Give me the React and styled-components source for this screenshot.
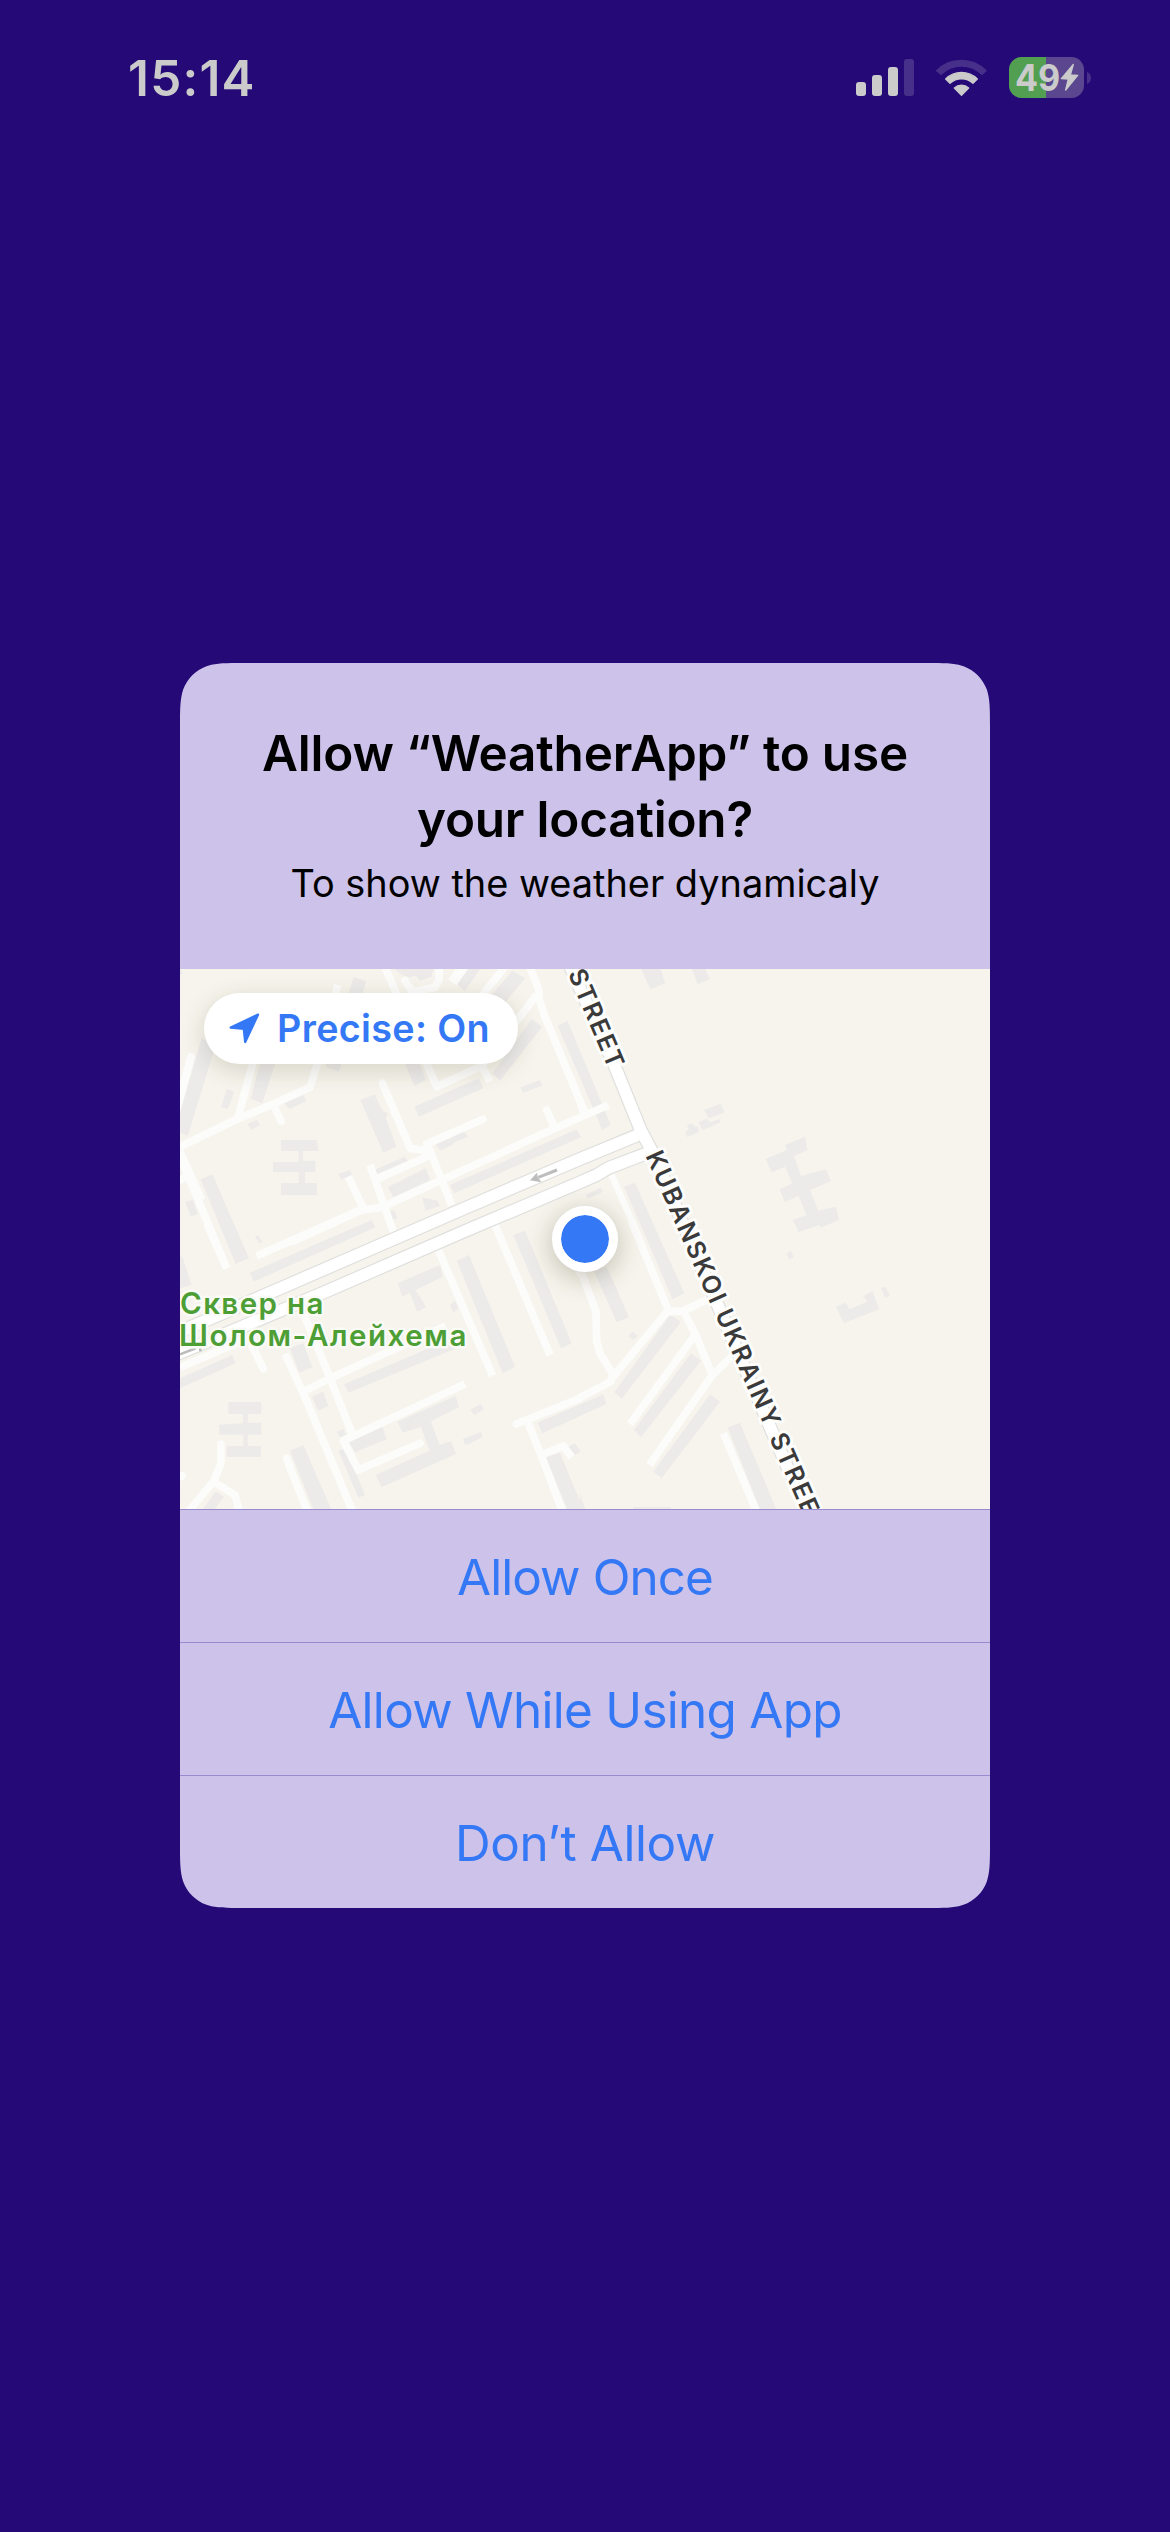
import React from "react";
import styled, { createGlobalStyle } from "styled-components";

const GlobalStyle = createGlobalStyle`
  *, *::before, *::after { box-sizing: border-box; }
  html, body { margin: 0; padding: 0; background: #250977; }
  body { font-family: Inter, "Noto Sans", sans-serif; }
`;

/* Outline of a rectangle with iOS-style continuous corners. */
const smoothRect = (w, h, r) => {
  const [a, b, c, d, e, f, g, i, j] = [
    1.52866, 1.08849, 0.86841, 0.66993, 0.0655, 0.63149, 0.07491, 0.37282, 0.16906,
  ].map((k) => k * r);
  const corner = (x, y) =>
    [
      [0, a], [0, b], [0, c], [g, f],
      [j, i], [i, j], [f, g],
      [d, e], [c, 0], [b, 0], [a, 0],
    ].map(([px, py]) => `${(x ? w - px : px).toFixed(2)} ${(y ? h - py : py).toFixed(2)}`);
  const forward = (p) => `${p[0]}C${p[1]} ${p[2]} ${p[3]}C${p[4]} ${p[5]} ${p[6]}L${p[7]}C${p[8]} ${p[9]} ${p[10]}`;
  const backward = (p) => `${p[10]}C${p[9]} ${p[8]} ${p[7]}L${p[6]}C${p[5]} ${p[4]} ${p[3]}C${p[2]} ${p[1]} ${p[0]}`;
  return `M${forward(corner(0, 0))}L${backward(corner(1, 0))}L${forward(corner(1, 1))}L${backward(corner(0, 1))}Z`;
};

const Screen = styled.div`
  display: flex;
  flex-direction: column;
  width: 1170px;
  height: 2532px;
  background: #250977;
  overflow: hidden;
`;

const StatusBar = styled.header`
  display: flex;
  justify-content: space-between;
  align-items: center;
  height: 155px;
  padding: 0 79px 0 128px;
`;

const Clock = styled.time`
  color: #cbcbcb;
  font-size: 49.4px;
  font-weight: 600;
  letter-spacing: 1.25px;
  line-height: 60px;
`;

const StatusIcons = styled.div`
  display: flex;
  align-items: center;
  gap: 22px;
`;

const Glyph = styled.svg`
  display: block;
  flex: none;
`;

const BatteryGroup = styled.div`
  display: flex;
  align-items: center;
  gap: 3px;
`;

const Battery = styled.div`
  display: flex;
  align-items: center;
  width: 75px;
  height: 41px;
  padding-left: 6px;
  border-radius: 12.5px;
  background: linear-gradient(
    to right,
    #529f52 0 ${(p) => p.$level}%,
    #5a4790 ${(p) => p.$level}% 100%
  );
`;

const BatteryLevel = styled.span`
  width: 45px;
  color: #cbcbcb;
  font-size: 37.5px;
  font-weight: 700;
  line-height: 41px;
  transform: scaleX(0.91);
  transform-origin: left center;
`;

const Dialog = styled.section`
  display: flex;
  flex-direction: column;
  width: 810px;
  height: 1245px;
  margin: 508px auto 0;
  clip-path: path("${smoothRect(810, 1245, 42)}");
  background: #ccc2ea;
  overflow: hidden;
`;

const DialogHeader = styled.div`
  display: flex;
  flex-direction: column;
  align-items: center;
  gap: 6px;
  height: 306px;
  padding: 57px 48px 0;
  color: #000;
  text-align: center;
`;

const Title = styled.h1`
  margin: 0;
  font-size: 49.4px;
  font-weight: 600;
  line-height: 66px;
  letter-spacing: -0.18px;
`;

const Subtitle = styled.p`
  margin: 0;
  font-size: 37.9px;
  line-height: 50px;
`;

const MapPreview = styled.div`
  position: relative;
  height: 540px;
  background: #f6f4ec;
  overflow: hidden;
`;

const MapDrawing = styled.svg`
  display: block;
`;

const PrecisePill = styled.button`
  position: absolute;
  top: 24px;
  left: 24px;
  display: flex;
  align-items: center;
  gap: 17px;
  width: 314px;
  height: 71px;
  padding: 0 0 0 25px;
  border: 0;
  border-radius: 36px;
  background: #fff;
  box-shadow: 0 6px 24px rgba(60, 50, 20, 0.17);
  color: #3478f6;
  font: 600 37.7px/71px Inter, "Noto Sans", sans-serif;
  letter-spacing: 0.35px;
  white-space: nowrap;
`;

const LocationDot = styled.div`
  position: absolute;
  top: 237px;
  left: 372px;
  width: 66px;
  height: 66px;
  border: 9.3px solid #fff;
  border-radius: 50%;
  background: #3478f6;
  background-clip: padding-box;
  box-shadow: 0 6px 26px rgba(60, 50, 20, 0.28);
`;

const Action = styled.button`
  height: 133px;
  padding: 2px 0 0;
  border: 0;
  border-top: 1px solid #9a8bd0;
  background: transparent;
  color: #3478f6;
  font: 400 49.4px/60px Inter, "Noto Sans", sans-serif;
  letter-spacing: ${(p) => p.$tracking}px;
`;

const Tile = styled.g``;

const Buildings = styled.path`
  fill: #ecebea;
`;

const Lanes = styled.path`
  fill: none;
  stroke: #fcfcfb;
  stroke-width: ${(p) => p.$width || 23}px;
  stroke-linecap: ${(p) => p.$cap || "butt"};
  stroke-linejoin: round;
`;

const Avenue = styled.path`
  fill: none;
  stroke: ${(p) => (p.$casing ? "#dfdfdd" : "#ffffff")};
  stroke-width: ${(p) => (p.$casing ? 42 : 35)}px;
  stroke-linejoin: round;
`;

const StreetName = styled.text`
  fill: #3a3a3a;
  stroke: #fdfdfc;
  stroke-width: 6px;
  stroke-linejoin: round;
  paint-order: stroke;
  font-size: 25px;
  font-weight: 600;
  letter-spacing: 1.8px;
`;

const ParkName = styled.text`
  fill: #4d9f35;
  stroke: #fafaf6;
  stroke-width: 5px;
  stroke-linejoin: round;
  paint-order: stroke;
  font-size: 29.5px;
  font-weight: 600;
  letter-spacing: ${(p) => p.$tracking}px;
`;

const poly = (list) =>
  list
    .map((points) => "M" + points.join(" ") + "Z")
    .join(" ");

const NW = "translate(-5 -9) scale(.33333)";
const NE = "translate(400 -9) scale(.33333)";
const SW = "translate(-5 261) scale(.33333)";
const SE = "translate(400 261) scale(.33333)";

const nwBuildings = poly([
  [650, 20, 778, 20, 768, 50, 735, 62, 722, 46, 704, 52, 680, 44],
  [536, 52, 574, 62, 492, 335, 453, 320],
  [880, 20, 915, 28, 870, 92, 840, 70],
  [1012, 32, 1050, 55, 960, 165, 920, 140],
  [1070, 178, 1102, 200, 975, 362, 952, 340],
  [1148, 197, 1178, 183, 1307, 495, 1282, 510],
  [80, 235, 122, 255, 38, 528, 0, 510],
  [155, 387, 178, 396, 158, 448, 138, 441],
  [258, 300, 304, 300, 262, 430, 227, 416],
  [325, 430, 385, 405, 395, 422, 345, 447],
  [218, 492, 245, 480, 255, 495, 228, 510],
  [686, 300, 726, 290, 753, 360, 718, 378],
  [718, 440, 912, 355, 925, 385, 732, 470],
  [1037, 382, 1095, 360, 1102, 377, 1045, 398],
  [556, 420, 600, 403, 622, 452, 640, 460, 632, 473, 664, 560, 625, 578],
  [318, 540, 425, 540, 430, 573, 384, 573, 384, 604, 421, 602, 421, 636, 390, 636, 390, 669, 426, 669, 426, 705, 318, 705, 318, 669, 371, 669, 371, 636, 294, 636, 294, 606, 371, 606, 371, 573, 318, 573],
  [782, 552, 828, 535, 828, 526, 868, 515, 880, 530, 835, 548, 830, 556, 795, 572],
  [825, 675, 1205, 508, 1218, 532, 838, 700],
  [597, 630, 690, 590, 698, 603, 605, 642],
  [490, 642, 525, 630, 532, 645, 498, 658],
  [638, 682, 752, 625, 765, 660, 655, 712],
  [742, 712, 788, 722, 795, 738, 752, 752],
  [642, 755, 658, 750, 668, 775, 650, 780],
  [77, 658, 112, 643, 222, 895, 182, 912],
  [30, 725, 55, 720, 68, 762, 48, 770],
  [15, 28, 24, 40, 15, 46],
]);

const neBuildings = poly([
  [180, 20, 240, 20, 255, 70, 212, 88],
  [333, 20, 372, 20, 390, 57, 353, 73],
  [372, 450, 422, 431, 434, 457, 386, 475],
  [355, 487, 380, 476, 390, 487, 418, 477, 421, 487, 368, 511],
  [315, 515, 328, 508, 320, 496, 335, 489, 345, 502, 354, 498, 357, 515, 322, 532],
  [557, 597, 620, 570, 615, 555, 675, 530, 682, 570, 642, 588, 663, 648, 738, 628, 753, 663, 690, 690, 715, 752, 768, 740, 777, 780, 722, 803, 718, 795, 657, 816, 638, 780, 680, 765, 655, 708, 615, 726, 598, 688, 637, 670, 615, 620, 575, 637],
  [17, 705, 62, 683, 68, 696, 25, 715],
  [132, 680, 165, 668, 313, 1000, 278, 1018],
]);

const swBuildings = poly([
  [15, 80, 22, 80, 50, 165, 15, 175],
  [225, 128, 590, -30, 602, -8, 236, 155],
  [240, 20, 248, 16, 263, 36, 252, 40],
  [15, 445, 172, 375, 182, 400, 15, 475],
  [345, 355, 385, 340, 412, 412, 372, 428],
  [668, 160, 795, 105, 803, 140, 722, 180, 735, 200, 753, 232, 727, 245, 712, 208, 705, 188, 682, 200],
  [825, 225, 840, 212, 850, 235, 835, 248],
  [845, 92, 882, 75, 1020, 410, 983, 430],
  [1015, 15, 1050, 2, 1190, 340, 1158, 355],
  [508, 462, 850, 318, 868, 345, 520, 488],
  [410, 500, 445, 485, 460, 528, 430, 542],
  [160, 516, 259, 516, 259, 552, 218, 552, 218, 578, 259, 578, 259, 614, 218, 614, 218, 648, 258, 648, 258, 681, 155, 681, 155, 648, 205, 648, 205, 614, 132, 614, 132, 584, 204, 580, 204, 552, 160, 552],
  [485, 605, 505, 597, 512, 615, 495, 622],
  [520, 632, 620, 585, 635, 628, 540, 667],
  [667, 575, 842, 498, 852, 532, 768, 574, 794, 645, 828, 633, 843, 672, 620, 772, 602, 735, 763, 662, 738, 590, 683, 608],
  [886, 540, 918, 521, 926, 538, 898, 556],
  [863, 628, 918, 606, 924, 622, 872, 646],
  [345, 662, 385, 645, 472, 845, 418, 845],
  [490, 662, 512, 655, 570, 795, 550, 803],
  [122, 785, 147, 800, 113, 845, 78, 845],
  [1088, 578, 1285, 493, 1294, 522, 1102, 610],
  [1112, 680, 1155, 668, 1228, 845, 1180, 845],
  [1180, 650, 1200, 640, 1217, 665, 1200, 675],
]);

const seBuildings = poly([
  [40, 120, 80, 110, 147, 262, 110, 277],
  [145, 318, 158, 305, 174, 318, 160, 330],
  [270, 255, 303, 275, 125, 507, 103, 487],
  [333, 370, 363, 392, 183, 622, 162, 600],
  [390, 493, 420, 515, 245, 745, 220, 725],
  [443, 592, 480, 578, 592, 845, 542, 845],
  [160, 830, 272, 830, 272, 845, 160, 845],
  [0, 790, 18, 845, 0, 845],
  [768, 230, 797, 218, 808, 238, 862, 215, 850, 198, 878, 183, 897, 238, 792, 280],
  [903, 175, 917, 170, 930, 198, 916, 204],
  [620, 70, 633, 62, 641, 82, 628, 88],
  [650, 0, 675, -5, 655, 5],
]);

function NeighbourhoodMap() {
  return (
    <MapDrawing width="810" height="540" viewBox="0 0 810 540">
      <Tile transform={NW}><Buildings d={nwBuildings} /></Tile>
      <Tile transform={NE}><Buildings d={neBuildings} /></Tile>
      <Tile transform={SW}><Buildings d={swBuildings} /></Tile>
      <Tile transform={SE}><Buildings d={seBuildings} /></Tile>

      <Tile transform={NW}>
        <Lanes d="M0 568L180 480L300 430L405 382L432 295M188 475L235 305M80 720L15 575M15 590L155 925M10 662L38 650M625 10L785 380L920 318L945 365M488 75L478 115M920 318L1000 215L1085 105M990 20L930 95L900 145M1060 10L1092 90L1092 115L1110 170L1230 460M760 560L830 735M585 615L655 815M605 658L760 588M520 650L565 745M345 848L560 750L620 742L800 660L1140 505L1300 435" />
        <Lanes $cap="round" d="M295 435L319 484M48 290L8 440M690 62L712 96L780 82L792 60L793 10M622 370L706 565L760 572M755 552L924 478M1115 450L1138 500" />
        <Lanes $width={30} d="M880 0L832 68" />
      </Tile>
      <Tile transform={NE}>
        <Lanes $width={20} d="M0 430L12 462M95 645L180 840" />
      </Tile>
      <Tile transform={SW}>
        <Lanes d="M95 -20L155 115M245 78L560 -62M15 412L232 320M790 60L953 437M960 -15L1125 375M330 372L385 490L535 850M385 250L435 370L533 615M385 485L465 445L812 288M505 632L870 462M400 850L340 700M1060 580L1102 685L1165 850M1100 675L1165 648L1190 682M115 755L40 845" />
        <Lanes $cap="round" d="M230 345L265 416M505 632L550 720L735 640M138 642L138 700L115 755L180 795L193 845M15 740L22 737M335 685L345 706M1215 505L1024 582M1180 30L1215 130" />
      </Tile>
      <Tile transform={SE}>
        <Lanes d="M155 -25L265 240L100 440M265 245L310 243L390 205M310 243L345 310L397 435L460 375M345 315L150 582M397 435L208 705M430 610L530 845M-30 60L5 130L48 245L50 335L60 370L97 430L93 455L-5 505" />
      </Tile>

      <Tile transform={NE}>
        {[true, false].map((casing) => (
          <React.Fragment key={String(casing)}>
            <Avenue $casing={casing} d="M-38 0L103 315L182 510L222 585L325 830L630 1540L740 1700" />
            <Avenue $casing={casing} d="M172 526L0 597L-340 742L-865 970L-1200 1115" />
            <Avenue $casing={casing} d="M200 580L85 624L50 645L0 667L-345 813L-775 1000L-1215 1185" />
          </React.Fragment>
        ))}
      </Tile>
      <Tile transform={NW}>
        <path d="M1146 630L1090 652" fill="none" stroke="#bdbdbd" strokeWidth="9" />
        <path d="M1065 661L1086 638L1088 650L1099 667Z" fill="#bdbdbd" />
      </Tile>
      <Tile transform={SW}>
        <path d="M15 373L62 355M76 352L76 364" fill="none" stroke="#bdbdbd" strokeWidth="8" />
      </Tile>

      <StreetName transform="translate(429.4 102.5) rotate(67)" textAnchor="end">STREET</StreetName>
      <StreetName transform="translate(465.3 186.5) rotate(66.3)">KUBANSKOI UKRAINY STREET</StreetName>
      <ParkName x="0" y="345" $tracking={1.4}>Сквер на</ParkName>
      <ParkName x="-1" y="377" $tracking={1.55}>Шолом-Алейхема</ParkName>
    </MapDrawing>
  );
}

function SignalIcon() {
  return (
    <Glyph width="58" height="41" viewBox="0 0 58 41" fill="#cbcbcb">
      <rect x="0" y="25" width="10" height="14" rx="3" />
      <rect x="16" y="18" width="10" height="21" rx="3" />
      <rect x="32" y="10" width="10" height="29" rx="3" />
      <rect x="48" y="2" width="10" height="37" rx="3" fill="#47308a" />
    </Glyph>
  );
}

function WifiIcon() {
  return (
    <Glyph width="51" height="41" viewBox="288 51 153 123" strokeLinejoin="round" strokeWidth="4">
      <path d="M290 92A105 105 0 0 1 438 92L426 103A88 88 0 0 0 303 103Z" fill="#47308a" stroke="#47308a" />
      <path d="M317 117A67 67 0 0 1 412 117L399 130A50 50 0 0 0 330 130Z" fill="#cbcbcb" stroke="#cbcbcb" />
      <path d="M343 144A31 31 0 0 1 386 144L364.500 166Z" fill="#cbcbcb" stroke="#cbcbcb" />
    </Glyph>
  );
}

function BoltIcon() {
  return (
    <Glyph width="19" height="29" viewBox="662 73 57 87">
      <path
        d="M702 77L666 120L687 121L679 154L715 110L693 109Z"
        fill="#cbcbcb"
        stroke="#cbcbcb"
        strokeWidth="4"
        strokeLinejoin="round"
      />
    </Glyph>
  );
}

function BatteryCap() {
  return (
    <Glyph width="4" height="12" viewBox="0 0 4 12">
      <path d="M0 0Q4 1.500 4 6Q4 10.500 0 12Z" fill="#47308a" />
    </Glyph>
  );
}

function ArrowIcon() {
  return (
    <Glyph width="31" height="31" viewBox="163 160 92 92">
      <path
        d="M249 165L168 203L207 207L211 246Z"
        fill="#3478f6"
        stroke="#3478f6"
        strokeWidth="7"
        strokeLinejoin="round"
      />
    </Glyph>
  );
}

export default function App() {
  return (
    <Screen>
      <GlobalStyle />
      <StatusBar>
        <Clock>15:14</Clock>
        <StatusIcons>
          <SignalIcon />
          <WifiIcon />
          <BatteryGroup>
            <Battery $level={49.3}>
              <BatteryLevel>49</BatteryLevel>
              <BoltIcon />
            </Battery>
            <BatteryCap />
          </BatteryGroup>
        </StatusIcons>
      </StatusBar>
      <Dialog>
        <DialogHeader>
          <Title>
            Allow “WeatherApp” to use
            <br />
            your location?
          </Title>
          <Subtitle>To show the weather dynamicaly</Subtitle>
        </DialogHeader>
        <MapPreview>
          <NeighbourhoodMap />
          <PrecisePill>
            <ArrowIcon />
            Precise: On
          </PrecisePill>
          <LocationDot />
        </MapPreview>
        <Action $tracking={-0.9}>Allow Once</Action>
        <Action $tracking={-0.7}>Allow While Using App</Action>
        <Action $tracking={-0.4}>Don’t Allow</Action>
      </Dialog>
    </Screen>
  );
}
